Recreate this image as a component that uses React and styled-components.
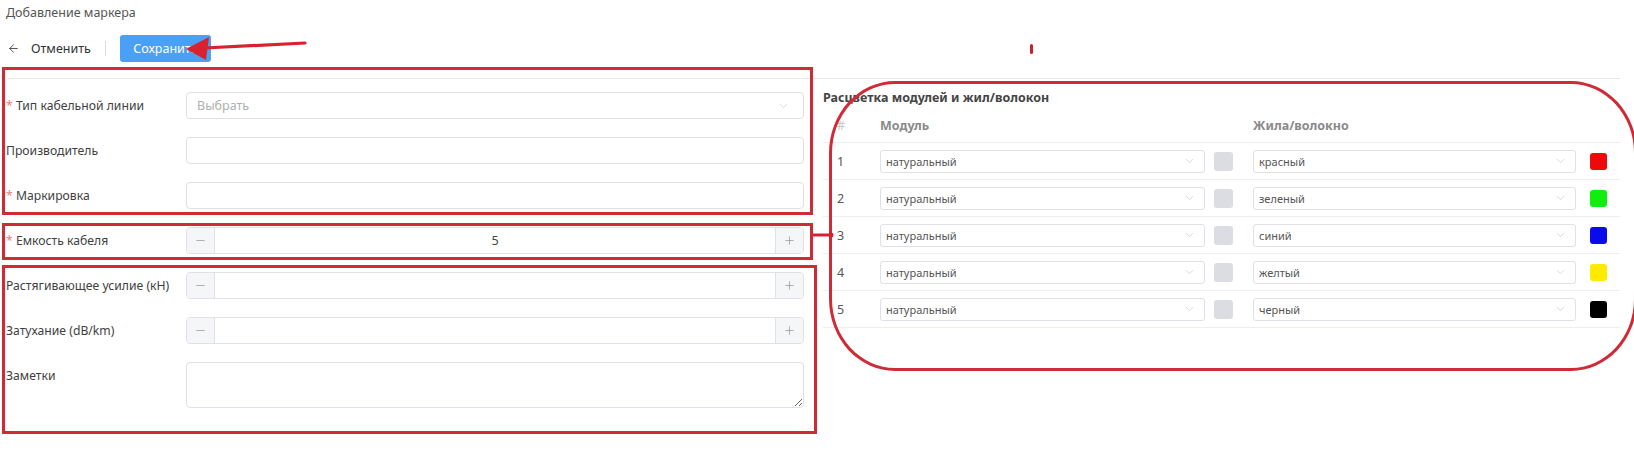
import React from "react";
import styled, { createGlobalStyle } from "styled-components";
import { ArrowLeft, ChevronDown, Minus, Plus } from "lucide-react";

const GlobalStyle = createGlobalStyle`
  body {
    margin: 0;
    background: #fff;
    font-family: "Noto Sans", "Open Sans", sans-serif;
    color: #333;
  }
  * { box-sizing: border-box; }
`;

const modules = [
  { id: 1, fiber: "красный", color: "#ee0a0a" },
  { id: 2, fiber: "зеленый", color: "#10ee10" },
  { id: 3, fiber: "синий", color: "#0a0aee" },
  { id: 4, fiber: "желтый", color: "#ffea00" },
  { id: 5, fiber: "черный", color: "#000" },
];

// red annotation boxes drawn over the form
const frames = [
  { x: 2, y: 67, w: 811, h: 148 },
  { x: 2, y: 223, w: 811, h: 37 },
  { x: 2, y: 265, w: 815, h: 169 },
];

function Chevron({ right }) {
  return (
    <ChevronBox $right={right}>
      <ChevronDown size={13} strokeWidth={1} color="#b8b8b8" />
    </ChevronBox>
  );
}

function Stepper({ value }) {
  return (
    <StepperBox>
      <StepButton $side="left">
        <Minus size={13} strokeWidth={1.2} color="#888" />
      </StepButton>
      <StepValue>{value}</StepValue>
      <StepButton $side="right">
        <Plus size={13} strokeWidth={1.2} color="#888" />
      </StepButton>
    </StepperBox>
  );
}

export default function App() {
  return (
    <Root>
      <GlobalStyle />
      <Title>Добавление маркера</Title>
      <Toolbar>
        <BackLink>
          <ArrowLeft size={13} strokeWidth={1.5} />
          <span>Отменить</span>
        </BackLink>
        <Separator />
        <SaveButton>Сохранить</SaveButton>
      </Toolbar>
      <Divider />

      <Columns>
        <LeftCol>
          <FormRow>
            <Label $required>Тип кабельной линии</Label>
            <Field>
              <Placeholder>Выбрать</Placeholder>
              <Chevron right={13} />
            </Field>
          </FormRow>
          <FormRow>
            <Label>Производитель</Label>
            <Field />
          </FormRow>
          <FormRow>
            <Label $required>Маркировка</Label>
            <Field />
          </FormRow>
          <FormRow>
            <Label $required>Емкость кабеля</Label>
            <Stepper value="5" />
          </FormRow>
          <FormRow>
            <Label>Растягивающее усилие (кН)</Label>
            <Stepper value="" />
          </FormRow>
          <FormRow>
            <Label>Затухание (dB/km)</Label>
            <Stepper value="" />
          </FormRow>
          <FormRow>
            <Label>Заметки</Label>
            <Notes />
          </FormRow>
        </LeftCol>

        <RightCol>
          <SectionTitle>Расцветка модулей и жил/волокон</SectionTitle>
          <HeadRow>
            <NumCell $muted>#</NumCell>
            <HeadCell $width={373}>Модуль</HeadCell>
            <HeadCell>Жила/волокно</HeadCell>
          </HeadRow>
          {modules.map((m) => (
            <TableRow key={m.id}>
              <NumCell>{m.id}</NumCell>
              <SmallSelect $width={325}>
                натуральный
                <Chevron right={8} />
              </SmallSelect>
              <Swatch $color="#dcdde2" $size={19} $gap={9} />
              <SmallSelect $width={323} $gap={20}>
                {m.fiber}
                <Chevron right={8} />
              </SmallSelect>
              <Swatch $color={m.color} $size={17} $gap={14} />
            </TableRow>
          ))}
        </RightCol>
      </Columns>

      <Annotations>
        {frames.map((f, i) => (
          <Frame key={i} $x={f.x} $y={f.y} $w={f.w} $h={f.h} />
        ))}
        <RoundFrame />
        <Marks width="1634" height="456">
          <line x1="204" y1="48" x2="305" y2="43" stroke="#d8222e" strokeWidth="3.2" strokeLinecap="round" />
          <polygon points="186,49 209,37 206,60" fill="#d8222e" />
          <line x1="813" y1="235" x2="831" y2="235" stroke="#d3232f" strokeWidth="3" />
          <circle cx="831" cy="235" r="2.5" fill="#d3232f" />
          <rect x="1030" y="44" width="3" height="10" rx="1.5" fill="#c8202c" />
        </Marks>
      </Annotations>
    </Root>
  );
}

const Root = styled.div`
  position: relative;
  width: 1634px;
  height: 456px;
  padding: 4px 0 0 6px;
  overflow: hidden;
`;

const Title = styled.div`
  font-size: 12.5px;
  line-height: 17px;
  color: #555;
`;

const Toolbar = styled.div`
  display: flex;
  align-items: center;
  height: 27px;
  margin-top: 14px;
`;

const BackLink = styled.div`
  display: flex;
  align-items: center;
  gap: 11px;
  padding-left: 1px;
  font-size: 12.5px;
  color: #333;
  svg { color: #333; }
`;

const Separator = styled.div`
  width: 1px;
  height: 15px;
  background: #dcdcdc;
  margin: 0 14px 0 14px;
`;

const SaveButton = styled.button`
  width: 91px;
  height: 27px;
  border: none;
  border-radius: 3px;
  background: #4aa0f5;
  color: #fff;
  font-family: inherit;
  font-size: 12.5px;
  padding: 0;
`;

const Divider = styled.div`
  height: 1px;
  background: #e8e8e8;
  margin: 16px 14px 0 1px;
`;

const Columns = styled.div`
  display: flex;
  align-items: flex-start;
  padding-top: 13px;
`;

const LeftCol = styled.div`
  width: 798px;
  display: flex;
  flex-direction: column;
  gap: 18px;
`;

const FormRow = styled.div`
  display: flex;
  align-items: flex-start;
`;

const Label = styled.div`
  width: 180px;
  flex-shrink: 0;
  font-size: 12.2px;
  line-height: 27px;
  color: #3f3f3f;
  &::before {
    content: ${(p) => (p.$required ? '"* "' : '""')};
    color: #f07b7b;
  }
`;

const Field = styled.div`
  position: relative;
  flex: 1;
  height: 27px;
  border: 1px solid #dfe1e6;
  border-radius: 4px;
  display: flex;
  align-items: center;
  padding-left: 10px;
`;

const Placeholder = styled.span`
  font-size: 12.5px;
  color: #b0b0b0;
`;

const ChevronBox = styled.span`
  position: absolute;
  right: ${(p) => p.$right}px;
  top: 50%;
  transform: translateY(-50%);
  display: flex;
`;

const StepperBox = styled.div`
  flex: 1;
  height: 27px;
  border: 1px solid #dfe1e6;
  border-radius: 4px;
  display: flex;
  overflow: hidden;
`;

const StepButton = styled.div`
  width: 28px;
  background: #f5f6f8;
  display: flex;
  align-items: center;
  justify-content: center;
  ${(p) => (p.$side === "left" ? "border-right" : "border-left")}: 1px solid #dfe1e6;
`;

const StepValue = styled.div`
  flex: 1;
  text-align: center;
  font-size: 12.5px;
  line-height: 25px;
  color: #444;
`;

const Notes = styled.textarea`
  flex: 1;
  height: 46px;
  border: 1px solid #dfe1e6;
  border-radius: 4px;
  resize: vertical;
  font-family: inherit;
  outline: none;
`;

const RightCol = styled.div`
  width: 797px;
  margin-left: 19px;
`;

const SectionTitle = styled.div`
  margin-top: -3.5px;
  font-size: 12.5px;
  line-height: 17px;
  font-weight: 700;
  color: #444;
`;

const HeadRow = styled.div`
  display: flex;
  align-items: center;
  height: 37.5px;
  padding-top: 4px;
  border-bottom: 1px solid #ebeef2;
`;

const HeadCell = styled.div`
  width: ${(p) => (p.$width ? `${p.$width}px` : "auto")};
  font-size: 12.5px;
  font-weight: 700;
  color: #8a8a8a;
`;

const NumCell = styled.div`
  width: 57px;
  padding-left: 14px;
  font-size: 12.5px;
  color: ${(p) => (p.$muted ? "#c8c8c8" : "#555")};
`;

const TableRow = styled.div`
  display: flex;
  align-items: center;
  height: 37.1px;
  border-bottom: 1px solid #ebeef2;
`;

const SmallSelect = styled.div`
  position: relative;
  width: ${(p) => p.$width}px;
  margin-left: ${(p) => p.$gap || 0}px;
  height: 23px;
  border: 1px solid #dfe1e6;
  border-radius: 3px;
  padding-left: 5px;
  display: flex;
  align-items: center;
  font-size: 11px;
  color: #555;
`;

const Swatch = styled.div`
  width: ${(p) => p.$size}px;
  height: ${(p) => p.$size}px;
  margin-left: ${(p) => p.$gap}px;
  border-radius: 3px;
  background: ${(p) => p.$color};
`;

const Annotations = styled.div`
  position: absolute;
  inset: 0;
  pointer-events: none;
`;

const Frame = styled.div`
  position: absolute;
  left: ${(p) => p.$x}px;
  top: ${(p) => p.$y}px;
  width: ${(p) => p.$w}px;
  height: ${(p) => p.$h}px;
  border: 3px solid #d02a36;
`;

const RoundFrame = styled.div`
  position: absolute;
  left: 829px;
  top: 81px;
  width: 808px;
  height: 290px;
  border: 3px solid #d02a36;
  border-radius: 66px / 72px;
`;

const Marks = styled.svg`
  position: absolute;
  left: 0;
  top: 0;
`;
